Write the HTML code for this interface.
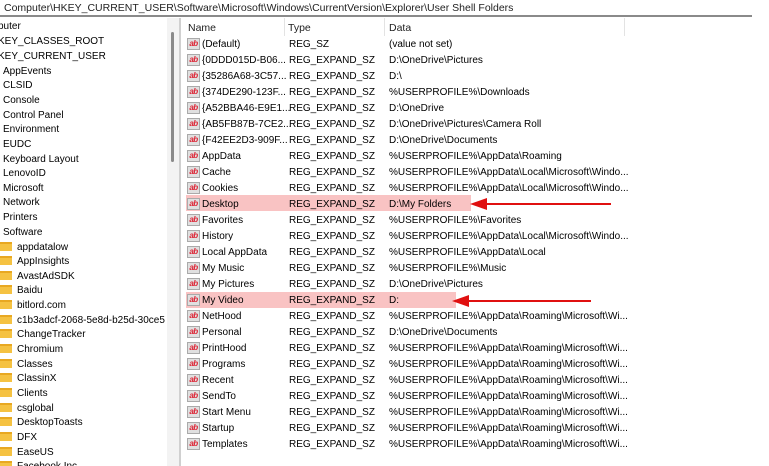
<!DOCTYPE html>
<html><head><meta charset="utf-8"><style>
*{margin:0;padding:0;box-sizing:border-box}
body{width:769px;height:466px;background:#fff;position:relative;overflow:hidden;font-family:"Liberation Sans",sans-serif;font-size:10px;color:#000}
.addr{position:absolute;left:0;top:0;width:752px;height:17px;border-bottom:2px solid #8a8a8a;padding:2px 0 0 4px;font-size:10.5px;color:#222}
.lt{position:absolute;left:0;top:20px;width:167px;height:446px;overflow:hidden}
.lt div{position:absolute;white-space:nowrap;height:14px;line-height:14px}
.fd{display:inline-block;width:12px;height:9px;background:#f5c242;border-top:2px solid #e8a822;vertical-align:-1px;margin-right:5px}
.gut{position:absolute;left:167px;top:18px;width:12px;height:448px;background:#f3f3f3}
.thumb{position:absolute;left:171px;top:32px;width:3px;height:130px;background:#8a8a8a;border-radius:2px}
.vb{position:absolute;left:179px;top:18px;width:2px;height:448px;background:#d0d0d0}
.rp{position:absolute;left:181px;top:18px;right:0;bottom:0}
.hd{position:absolute;top:1px;height:18px;line-height:18px;font-size:10.5px;color:#222}
.sep{position:absolute;top:0;width:1px;height:18px;background:#e3e3e3}
.row{position:absolute;left:0;height:16px;line-height:16px;white-space:nowrap;width:600px}
.row span{position:absolute}
.ic{position:absolute;left:6px;top:2px;width:13px;height:12px;background:#e0e0e0;border:1px solid #aaa;font-size:8px;line-height:10px;color:#d23;font-weight:bold;text-align:center;letter-spacing:-.5px}
.hl{position:absolute;background:#f9c3c3;height:16px}
</style></head><body>
<div class="addr">Computer\HKEY_CURRENT_USER\Software\Microsoft\Windows\CurrentVersion\Explorer\User Shell Folders</div>
<div class="lt">
<div style="left:-2px;top:0">puter</div>
<div style="left:-2px;top:15px">KEY_CLASSES_ROOT</div>
<div style="left:-2px;top:30px">KEY_CURRENT_USER</div>
<div style="left:3px;top:45px">AppEvents</div>
<div style="left:3px;top:59px">CLSID</div>
<div style="left:3px;top:74px">Console</div>
<div style="left:3px;top:89px">Control Panel</div>
<div style="left:3px;top:103px">Environment</div>
<div style="left:3px;top:118px">EUDC</div>
<div style="left:3px;top:133px">Keyboard Layout</div>
<div style="left:3px;top:147px">LenovoID</div>
<div style="left:3px;top:162px">Microsoft</div>
<div style="left:3px;top:176px">Network</div>
<div style="left:3px;top:191px">Printers</div>
<div style="left:3px;top:206px">Software</div>
<div style="left:0;top:221px"><i class="fd"></i>appdatalow</div>
<div style="left:0;top:235px"><i class="fd"></i>AppInsights</div>
<div style="left:0;top:250px"><i class="fd"></i>AvastAdSDK</div>
<div style="left:0;top:264px"><i class="fd"></i>Baidu</div>
<div style="left:0;top:279px"><i class="fd"></i>bitlord.com</div>
<div style="left:0;top:294px"><i class="fd"></i>c1b3adcf-2068-5e8d-b25d-30ce5</div>
<div style="left:0;top:308px"><i class="fd"></i>ChangeTracker</div>
<div style="left:0;top:323px"><i class="fd"></i>Chromium</div>
<div style="left:0;top:338px"><i class="fd"></i>Classes</div>
<div style="left:0;top:352px"><i class="fd"></i>ClassinX</div>
<div style="left:0;top:367px"><i class="fd"></i>Clients</div>
<div style="left:0;top:382px"><i class="fd"></i>csglobal</div>
<div style="left:0;top:396px"><i class="fd"></i>DesktopToasts</div>
<div style="left:0;top:411px"><i class="fd"></i>DFX</div>
<div style="left:0;top:426px"><i class="fd"></i>EaseUS</div>
<div style="left:0;top:440px"><i class="fd"></i>Facebook Inc</div>
</div>
<div class="gut"></div><div class="thumb"></div><div class="vb"></div>
<div class="rp">
<div class="hd" style="left:7px">Name</div>
<div class="sep" style="left:103px"></div>
<div class="hd" style="left:107px">Type</div>
<div class="sep" style="left:203px"></div>
<div class="hd" style="left:208px">Data</div>
<div class="sep" style="left:443px"></div>
<div class="hl" style="left:5px;top:177px;width:285px"></div>
<div class="hl" style="left:5px;top:274px;width:270px"></div>
<div id="rows"></div>
<svg style="position:absolute;left:0;top:0" width="588" height="448">
<line x1="430" y1="186" x2="300" y2="186" stroke="#e01010" stroke-width="2"/>
<polygon points="289,186 306,180 306,192" fill="#e01010"/>
<line x1="410" y1="283" x2="282" y2="283" stroke="#e01010" stroke-width="2"/>
<polygon points="271,283 288,277 288,289" fill="#e01010"/>
</svg>
</div>
<script>
var d=[["(Default)","REG_SZ","(value not set)"],["{0DDD015D-B06...","REG_EXPAND_SZ","D:\\OneDrive\\Pictures"],["{35286A68-3C57...","REG_EXPAND_SZ","D:\\"],["{374DE290-123F...","REG_EXPAND_SZ","%USERPROFILE%\\Downloads"],["{A52BBA46-E9E1...","REG_EXPAND_SZ","D:\\OneDrive"],["{AB5FB87B-7CE2...","REG_EXPAND_SZ","D:\\OneDrive\\Pictures\\Camera Roll"],["{F42EE2D3-909F...","REG_EXPAND_SZ","D:\\OneDrive\\Documents"],["AppData","REG_EXPAND_SZ","%USERPROFILE%\\AppData\\Roaming"],["Cache","REG_EXPAND_SZ","%USERPROFILE%\\AppData\\Local\\Microsoft\\Windo..."],["Cookies","REG_EXPAND_SZ","%USERPROFILE%\\AppData\\Local\\Microsoft\\Windo..."],["Desktop","REG_EXPAND_SZ","D:\\My Folders"],["Favorites","REG_EXPAND_SZ","%USERPROFILE%\\Favorites"],["History","REG_EXPAND_SZ","%USERPROFILE%\\AppData\\Local\\Microsoft\\Windo..."],["Local AppData","REG_EXPAND_SZ","%USERPROFILE%\\AppData\\Local"],["My Music","REG_EXPAND_SZ","%USERPROFILE%\\Music"],["My Pictures","REG_EXPAND_SZ","D:\\OneDrive\\Pictures"],["My Video","REG_EXPAND_SZ","D:"],["NetHood","REG_EXPAND_SZ","%USERPROFILE%\\AppData\\Roaming\\Microsoft\\Wi..."],["Personal","REG_EXPAND_SZ","D:\\OneDrive\\Documents"],["PrintHood","REG_EXPAND_SZ","%USERPROFILE%\\AppData\\Roaming\\Microsoft\\Wi..."],["Programs","REG_EXPAND_SZ","%USERPROFILE%\\AppData\\Roaming\\Microsoft\\Wi..."],["Recent","REG_EXPAND_SZ","%USERPROFILE%\\AppData\\Roaming\\Microsoft\\Wi..."],["SendTo","REG_EXPAND_SZ","%USERPROFILE%\\AppData\\Roaming\\Microsoft\\Wi..."],["Start Menu","REG_EXPAND_SZ","%USERPROFILE%\\AppData\\Roaming\\Microsoft\\Wi..."],["Startup","REG_EXPAND_SZ","%USERPROFILE%\\AppData\\Roaming\\Microsoft\\Wi..."],["Templates","REG_EXPAND_SZ","%USERPROFILE%\\AppData\\Roaming\\Microsoft\\Wi..."]];
var h="";d.forEach(function(r,i){h+='<div class="row" style="top:'+(18+16*i)+'px"><i class="ic">ab</i><span style="left:21px;top:1px">'+r[0]+'</span><span style="left:108px;top:1px">'+r[1]+'</span><span style="left:208px;top:1px">'+r[2]+'</span></div>';});
document.getElementById("rows").innerHTML=h;
</script>
</body></html>
